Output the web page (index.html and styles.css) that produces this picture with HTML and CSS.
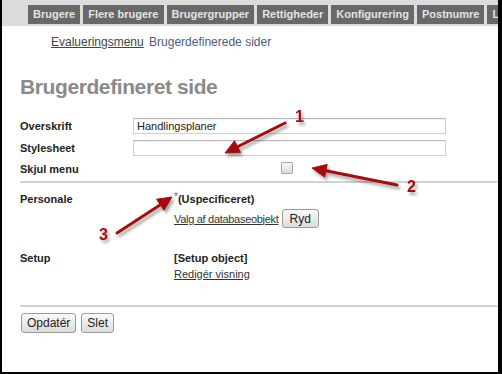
FILE: index.html
```html
<!DOCTYPE html>
<html lang="da">
<head>
    <meta charset="UTF-8">
    <title>Brugerdefineret side</title>
    <link rel="stylesheet" href="styles.css">
</head>
<body>
<div id="page">
    <div id="tabs">
        <a class="tab">Brugere</a>
        <a class="tab">Flere brugere</a>
        <a class="tab">Brugergrupper</a>
        <a class="tab">Rettigheder</a>
        <a class="tab">Konfigurering</a>
        <a class="tab">Postnumre</a>
        <a class="tab">Log</a>
    </div>

    <div id="content">
        <div class="crumbs">
            <a class="crumb-link">Evalueringsmenu</a>
            <span class="crumb-current">Brugerdefinerede sider</span>
        </div>

        <h1>Brugerdefineret side</h1>

        <div class="form-grid">
            <label class="lbl">Overskrift</label>
            <input class="txt" type="text" value="Handlingsplaner">
            <label class="lbl">Stylesheet</label>
            <input class="txt" type="text" value="">
            <label class="lbl">Skjul menu</label>
            <input class="chk" type="checkbox">
        </div>

        <div class="sep"></div>

        <div class="obj-grid">
            <div class="lbl">Personale</div>
            <div class="obj-val">
                <div class="obj-name"><span class="req">*</span>(Uspecificeret)</div>
                <div class="obj-actions">
                    <a class="plain-link">Valg af databaseobjekt</a>
                    <button class="btn btn-ryd">Ryd</button>
                </div>
            </div>

            <div class="lbl setup">Setup</div>
            <div class="obj-val setup">
                <div class="obj-name">[Setup object]</div>
                <a class="plain-link edit">Redigér visning</a>
            </div>
        </div>

        <div class="sep sep-bottom"></div>

        <div class="buttons">
            <button class="btn">Opdatér</button>
            <button class="btn">Slet</button>
        </div>
    </div>

    <!-- røde pile ovenpå -->
    <svg id="arrows" width="502" height="374" viewBox="0 0 502 374">
        <defs>
            <filter id="shade" x="-20%" y="-20%" width="150%" height="160%">
                <feDropShadow dx="2" dy="3" stdDeviation="1.6" flood-color="#000" flood-opacity="0.35"/>
            </filter>
        </defs>
        <g filter="url(#shade)" fill="#a30d0d" stroke="#a30d0d">
            <line x1="285" y1="123" x2="238" y2="146.5" stroke-width="3" stroke-linecap="round"/>
            <polygon points="225,153 240.5,152.5 234.5,140.8" stroke-width="1"/>

            <line x1="397" y1="185" x2="326" y2="170.8" stroke-width="3" stroke-linecap="round"/>
            <polygon points="312,168 327.2,164.4 324.6,177" stroke-width="1"/>

            <line x1="117" y1="233" x2="160" y2="205" stroke-width="3" stroke-linecap="round"/>
            <polygon points="172,197 164,210.2 156.6,199.2" stroke-width="1"/>

            <text x="295" y="122" class="num" stroke="none">1</text>
            <text x="407" y="192" class="num" stroke="none">2</text>
            <text x="99" y="240" class="num" stroke="none">3</text>
        </g>
    </svg>
</div>
</body>
</html>
```

FILE: styles.css
```css
body {
    margin: 0;
    font-family: "Liberation Sans", Arial, sans-serif;
    font-size: 11px;
    color: #222;
    background: #fff;
}

#page {
    position: relative;
    width: 502px;
    height: 374px;
    box-sizing: border-box;
    border-left: 2px solid #000;
    border-right: 4px solid #000;
    border-bottom: 2px solid #000;
    overflow: hidden;
}

#tabs {
    display: flex;
    gap: 3px;
    padding: 5px 0 2px 26px;
    background: #dcdcdc;
    border-top: 1px solid #e6e6e6;
    margin-top: -1px;
    overflow: hidden;
    white-space: nowrap;
}

.tab {
    flex: none;
    display: block;
    padding: 0 5px;
    height: 19px;
    line-height: 19px;
    background: #686868;
    color: #e4e4e4;
    font-weight: bold;
    font-size: 11px;
}

#content {
    padding-left: 18px;
}

.crumbs {
    margin-top: 9px;
    padding-left: 31px;
    font-size: 12px;
    line-height: 14px;
}

.crumb-link {
    color: #444;
    text-decoration: underline;
    margin-right: 2px;
}

.crumb-current {
    color: #4d5b84;
}

h1 {
    margin: 26px 0 16px 0;
    font-size: 21px;
    line-height: 24px;
    letter-spacing: -0.4px;
    color: #8a8a8a;
}

.form-grid {
    display: grid;
    grid-template-columns: 113px 313px;
    grid-template-rows: 22px 22px 20px;
    align-items: center;
}

.lbl {
    font-weight: bold;
    font-size: 11px;
    color: #222;
}

.txt {
    box-sizing: border-box;
    width: 313px;
    height: 16px;
    margin: 0;
    padding: 0 3px;
    border: 1px solid #cfcfcf;
    border-top-color: #b8b8b8;
    box-shadow: inset 0 1px 1px rgba(0, 0, 0, 0.06);
    font-family: "Liberation Sans", Arial, sans-serif;
    font-size: 11px;
    color: #222;
    background: #fff;
}

.chk {
    appearance: none;
    -webkit-appearance: none;
    width: 12px;
    height: 12px;
    margin: 0 0 2px 148px;
    border: 1px solid #a6a6a6;
    border-radius: 1px;
    background: linear-gradient(#f6f6f6, #dedede);
}

.sep {
    margin-top: 2px;
    border-top: 2px solid #d2d2d2;
}

.obj-grid {
    display: grid;
    grid-template-columns: 154px auto;
    padding-top: 9px;
    line-height: 14px;
}

.obj-name {
    font-weight: bold;
}

.req {
    color: #e53030;
    font-weight: normal;
    font-size: 10px;
    vertical-align: top;
    line-height: 10px;
}

.obj-actions {
    display: flex;
    align-items: center;
    gap: 3px;
    margin-top: 3px;
}

.plain-link {
    color: #333;
    text-decoration: underline;
    letter-spacing: -0.3px;
}

.setup {
    margin-top: 23px;
}

.edit {
    display: block;
    margin-top: 2px;
    letter-spacing: 0;
}

.sep-bottom {
    margin-top: 24px;
}

.buttons {
    display: flex;
    gap: 5px;
    margin-top: 6px;
    padding-left: 1px;
}

.btn {
    height: 20px;
    margin: 0;
    padding: 0 5px;
    border: 1px solid #9a9a9a;
    border-radius: 3px;
    background: linear-gradient(#fafafa, #dcdcdc);
    font-family: "Liberation Sans", Arial, sans-serif;
    font-size: 12px;
    color: #222;
}

.btn-ryd {
    height: 19px;
    padding: 0 7px;
}

#arrows {
    position: absolute;
    top: 0;
    left: -2px;
    pointer-events: none;
}

.num {
    font-family: "Liberation Sans", Arial, sans-serif;
    font-weight: bold;
    font-size: 16px;
}
```
